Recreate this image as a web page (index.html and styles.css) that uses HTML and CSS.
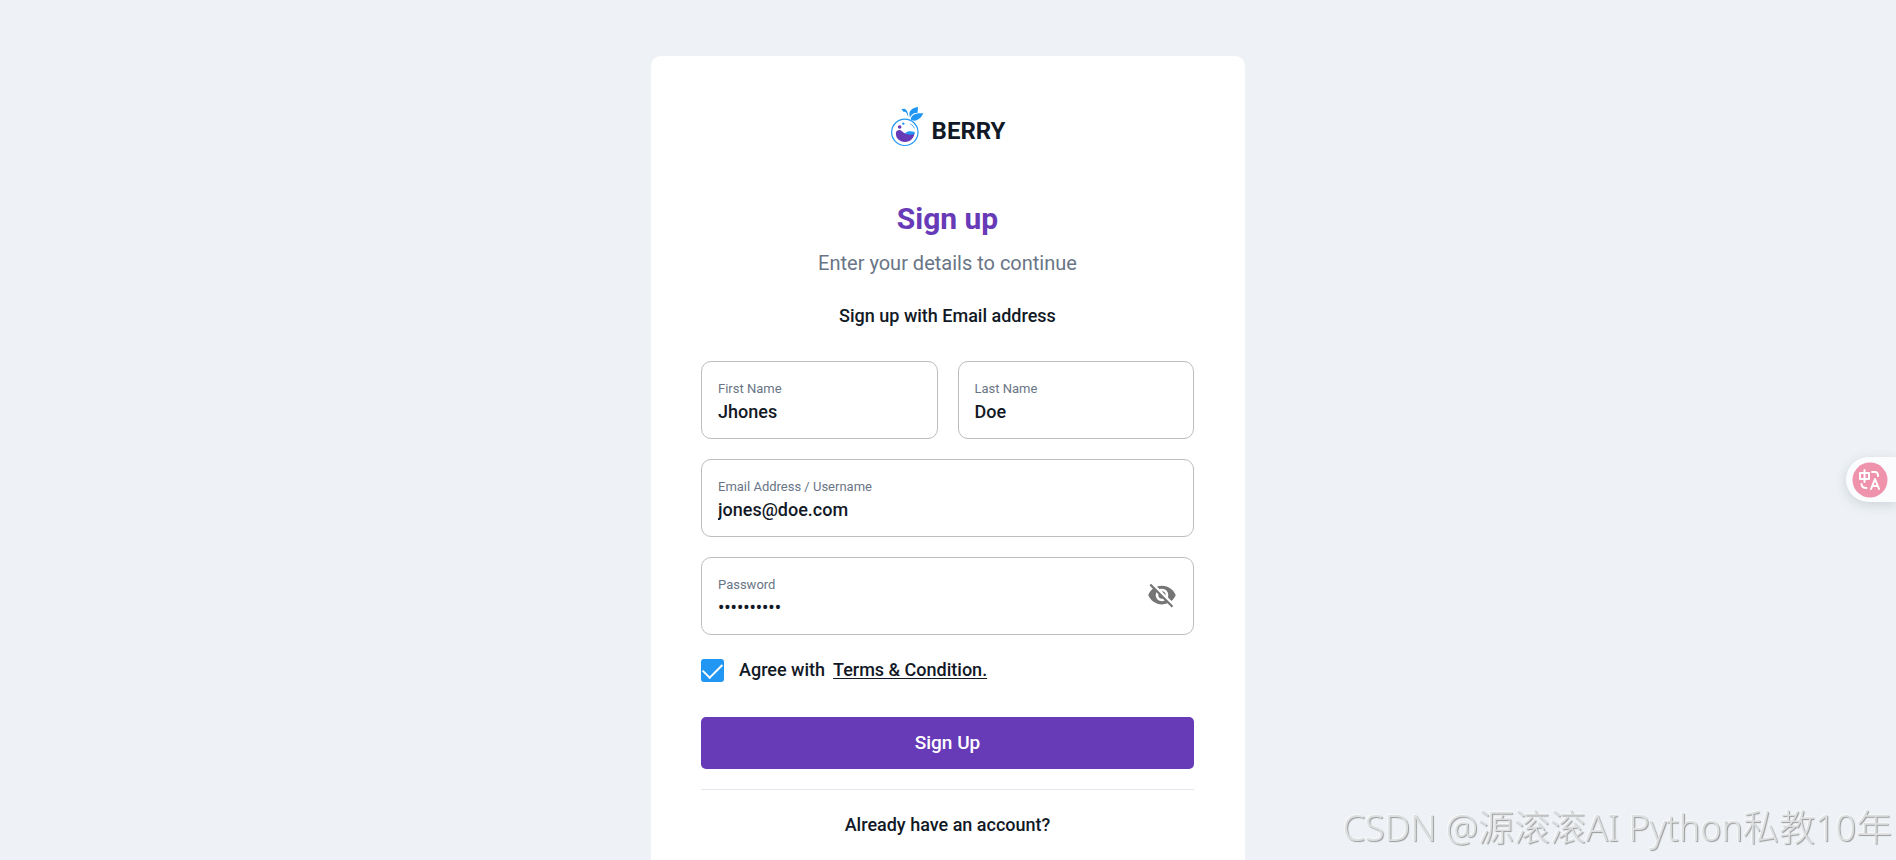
FILE: index.html
```html
<!DOCTYPE html>
<html lang="en">
<head>
<meta charset="utf-8">
<meta name="viewport" content="width=device-width, initial-scale=1">
<title>Berry - Sign up</title>
<link rel="stylesheet" href="styles.css">
</head>
<body>
<main class="page">
  <section class="card">
    <a class="logo" href="#" aria-label="Berry">
      <svg class="logo-mark" viewBox="57 45 102 126" aria-hidden="true">
        <circle cx="101.500" cy="124" r="39.500" fill="#fff" stroke="#2196f3" stroke-width="3.600"/>
        <path d="M91 55c9-5 20-1 21 23-5-12-8-17-13-15-3-1-5-5-8-8z" fill="#2196f3"/>
        <path d="M117 79c-6-17 3-28 24-31 0 7-1 12-1 17-11 0-18 4-23 14z" fill="#2196f3"/>
        <path d="M119 83c4-13 18-18 38-16-7 15-19 25-33 21-2 0-4-2-5-5z" fill="#2196f3"/>
        <path d="M75 123c4-7 12-9 18-2 10 11 22 8 37 6 0 14-12 26-28 26-17 0-30-13-27-30z" fill="#673ab7"/>
        <path d="M102 127c8-8 18-7 29-4v6c-10 3-20 3-29-2z" fill="#2196f3"/>
        <circle cx="86" cy="108" r="5.500" fill="#673ab7"/>
        <circle cx="97" cy="98" r="3.500" fill="#2196f3"/>
        <path d="M118 99c6 3 10 7 12 13" fill="none" stroke="#2196f3" stroke-width="2.500"/>
      </svg>
      <span class="logo-text">BERRY</span>
    </a>
    <h1 class="title">Sign up</h1>
    <p class="lead">Enter your details to continue</p>
    <p class="subtitle">Sign up with Email address</p>
    <form class="form">
      <div class="row">
        <div class="field">
          <label for="first">First Name</label>
          <input id="first" type="text" value="Jhones">
        </div>
        <div class="field">
          <label for="last">Last Name</label>
          <input id="last" type="text" value="Doe">
        </div>
      </div>
      <div class="field">
        <label for="email">Email Address / Username</label>
        <input id="email" type="email" value="jones@doe.com">
      </div>
      <div class="field field-password">
        <div class="field-body">
          <label for="password">Password</label>
          <input id="password" type="password" value="1234567890">
        </div>
        <button class="toggle" type="button" aria-label="Toggle password visibility">
          <svg viewBox="0 0 24 24" aria-hidden="true"><path fill="currentColor" d="M12 7c2.760 0 5 2.240 5 5 0 .65-.13 1.260-.36 1.830l2.920 2.920c1.510-1.260 2.700-2.890 3.430-4.750-1.730-4.390-6-7.500-11-7.500-1.400 0-2.740.25-3.980.7l2.160 2.160C10.740 7.130 11.350 7 12 7zM2 4.270l2.280 2.280.46.46C3.080 8.300 1.780 10.020 1 12c1.730 4.390 6 7.500 11 7.500 1.550 0 3.030-.3 4.380-.84l.42.42L19.730 22 21 20.730 3.270 3 2 4.270zM7.530 9.800l1.550 1.550c-.05.21-.08.43-.08.65 0 1.660 1.340 3 3 3 .22 0 .44-.03.65-.08l1.550 1.550c-.67.33-1.410.53-2.200.53-2.760 0-5-2.240-5-5 0-.79.2-1.530.53-2.200zm4.310-.78l3.150 3.150.02-.16c0-1.660-1.340-3-3-3l-.17.01z"/></svg>
        </button>
      </div>
      <div class="agree">
        <input class="check" id="agree" type="checkbox" checked>
        <label for="agree">Agree with</label>
        <a href="#">Terms &amp; Condition.</a>
      </div>
      <button class="submit" type="submit">Sign Up</button>
    </form>
    <hr class="divider">
    <a class="signin" href="#">Already have an account?</a>
  </section>
</main>
<button class="translate" type="button" aria-label="Translate">
  <svg viewBox="0 0 36 36" aria-hidden="true">
    <circle cx="18" cy="18" r="17.500" fill="#ef92ab"/>
    <g fill="none" stroke="#fff" stroke-width="2" stroke-linecap="round" stroke-linejoin="round">
      <path d="M8 11h9v6H8zM12.500 8v12"/>
      <path d="M20 10h3q3 0 3 4M9.500 22q0 4 5 4"/>
      <path d="M19 27l4-10 4 10M20.500 24h5"/>
    </g>
  </svg>
</button>
<div class="watermark" lang="zh-CN">CSDN @源滚滚AI Python私教10年</div>
</body>
</html>
```

FILE: styles.css
```css
* {
  box-sizing: border-box;
}

body {
  margin: 0;
  background: #eef2f6;
  color: #121926;
  font-family: Roboto, "Liberation Sans", sans-serif;
  font-size: 18px;
  font-weight: 500;
  line-height: 24px;
}

a {
  color: inherit;
}

.page {
  display: flex;
  justify-content: center;
  min-height: 100vh;
  padding-top: 56px;
}

.card {
  display: flex;
  flex-direction: column;
  width: 100%;
  max-width: 594px;
  padding: 50px 51px 24px 50px;
  border-radius: 10px 10px 0 0;
  background: #fff;
}

.logo {
  display: flex;
  align-items: center;
  align-self: center;
  gap: 8px;
  text-decoration: none;
}

.logo-mark {
  width: 34px;
  height: 42px;
}

.logo-text {
  padding-top: 8px;
  font-size: 24px;
  font-weight: 700;
}

.title {
  margin: 53px 0 0;
  color: #673ab7;
  font-size: 30px;
  font-weight: 700;
  line-height: 36px;
  text-align: center;
}

.lead {
  margin: 10px 0 0;
  color: #697586;
  font-size: 20px;
  font-weight: 400;
  line-height: 32px;
  text-align: center;
}

.subtitle {
  margin: 25px 0 33px;
  text-align: center;
}

.form {
  display: flex;
  flex-direction: column;
  gap: 20px;
}

.row {
  display: grid;
  grid-template-columns: 1fr 1fr;
  gap: 20px;
}

.field {
  min-width: 0;
  height: 78px;
  padding: 18px 16px 0;
  border: 1px solid #bdbdbd;
  border-radius: 10px;
}

.field label {
  display: block;
  color: #697586;
  font-size: 13px;
  font-weight: 400;
  line-height: 18px;
}

.field input {
  display: block;
  width: 100%;
  height: 26px;
  padding: 0;
  border: 0;
  outline: 0;
  background: transparent;
  color: inherit;
  font: inherit;
}

.field-password {
  display: flex;
}

.field-body {
  flex: 1;
}

.toggle {
  align-self: flex-start;
  margin-top: 4px;
  padding: 0;
  border: 0;
  background: none;
  color: #757575;
}

.toggle svg {
  display: block;
  width: 30px;
  height: 30px;
}

.agree {
  display: flex;
  align-items: center;
  gap: 8px;
  height: 30px;
}

.agree label {
  margin-left: 7px;
}

.agree a {
  text-underline-offset: 2px;
}

.check {
  display: grid;
  place-items: center;
  width: 23px;
  height: 23px;
  margin: 0;
  border-radius: 3px;
  appearance: none;
  background: #2196f3;
}

.check::before {
  content: "";
  width: 17px;
  height: 9px;
  border-bottom: 2px solid #fff;
  border-left: 2px solid #fff;
  transform: translateY(-2px) rotate(-45deg);
}

.submit {
  height: 52px;
  margin-top: 12px;
  border: 0;
  border-radius: 5px;
  background: #673ab7;
  color: #fff;
  font: inherit;
  font-size: 19px;
}

.divider {
  width: 100%;
  height: 1px;
  margin: 20px 0 23px;
  border: 0;
  background: #e3e8ef;
}

.signin {
  align-self: center;
  text-decoration: none;
}

.translate {
  position: fixed;
  top: 457px;
  right: 0;
  width: 50px;
  height: 45px;
  padding: 5px 8px 5px 6px;
  border: 0;
  border-radius: 23px 0 0 23px;
  background: #fbfcfe;
  box-shadow: 0 3px 12px rgba(60, 70, 90, 0.18);
}

.translate svg {
  display: block;
  width: 36px;
  height: 36px;
}

.watermark {
  position: fixed;
  right: 4px;
  bottom: 8px;
  color: #dcdedf;
  font-family: "Noto Sans", "Noto Sans CJK SC", sans-serif;
  font-size: 36px;
  font-weight: 300;
  line-height: 48px;
  text-shadow: 1px 1px 1px #999, -1px -1px 0 #f8f8f8;
  white-space: nowrap;
  pointer-events: none;
}
```
